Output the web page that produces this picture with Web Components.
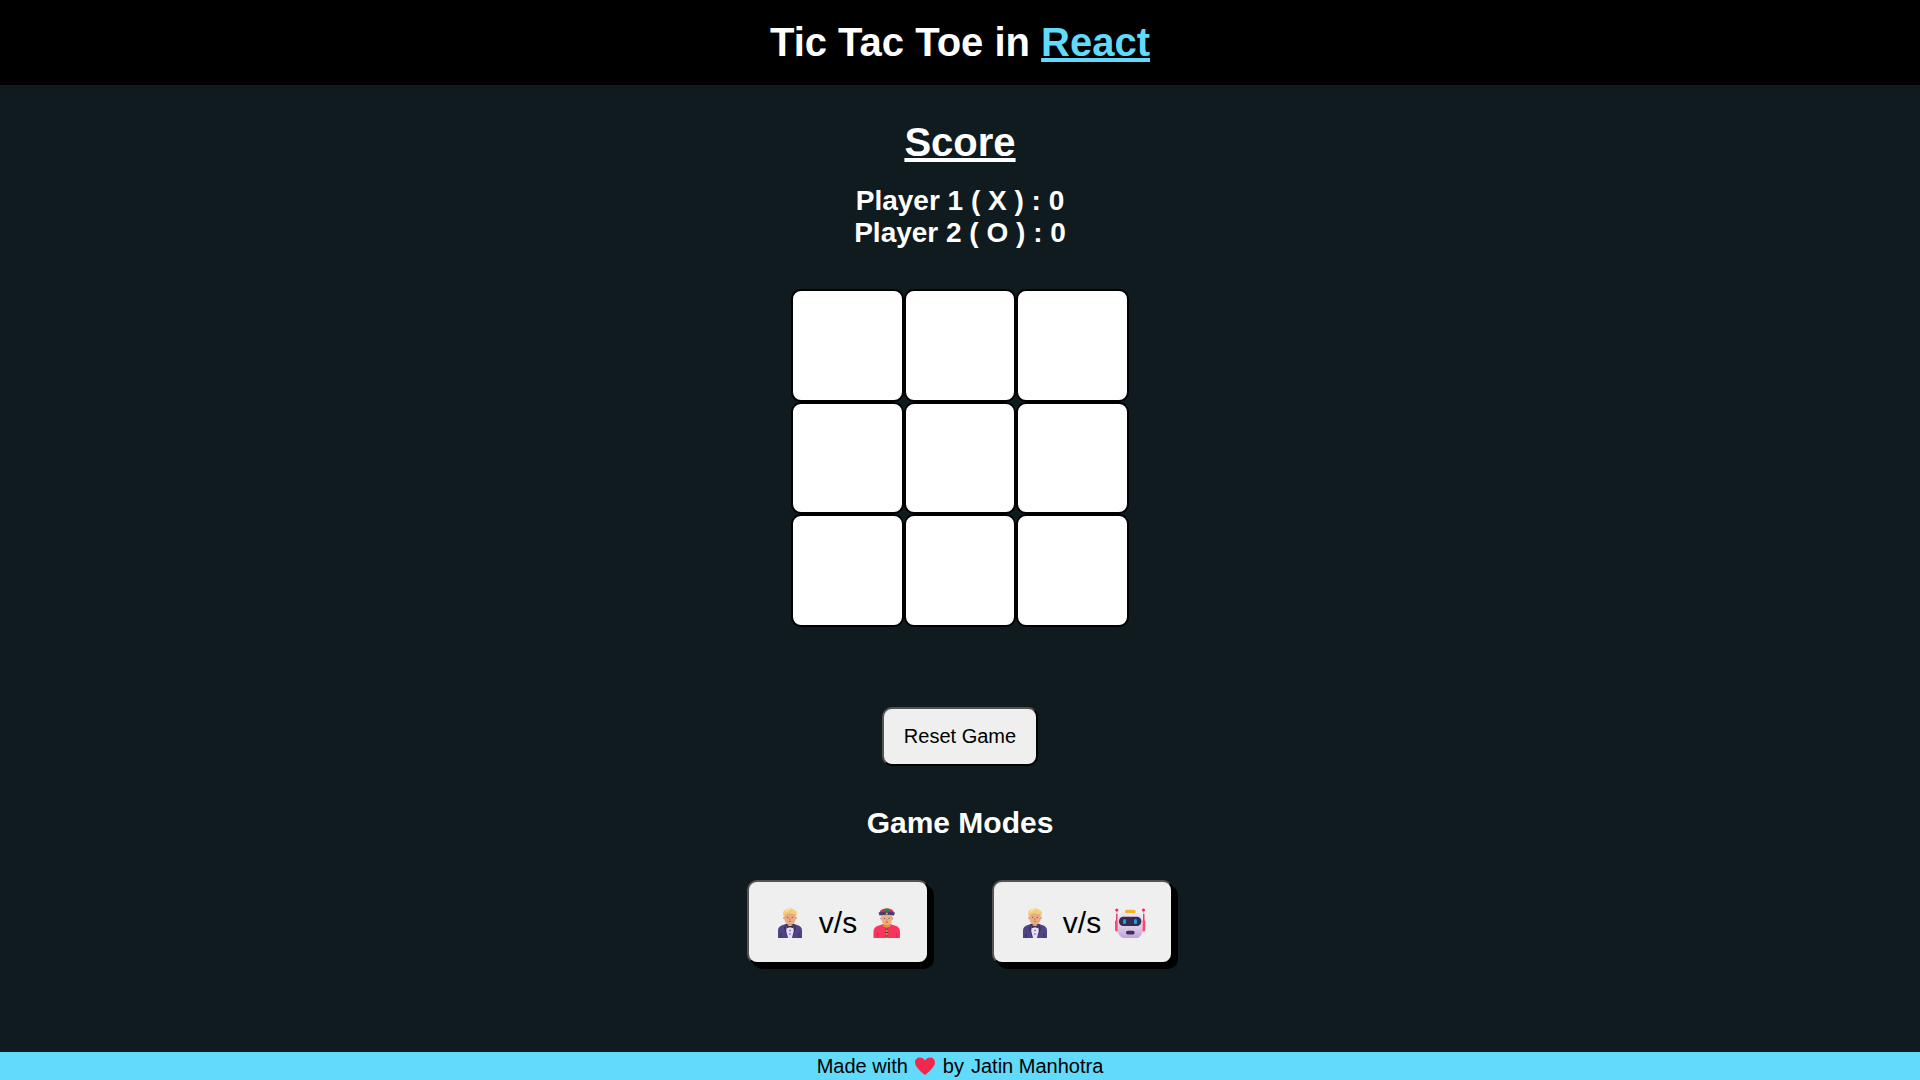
<!DOCTYPE html>
<html lang="en">
<head>
<meta charset="utf-8">
<meta name="viewport" content="width=device-width, initial-scale=1">
<title>Tic Tac Toe in React</title>
<style>
  body {
    margin: 0;
    background: #101b20;
    color: #fff;
    font-family: "Liberation Sans", Arial, Helvetica, sans-serif;
  }
</style>
</head>
<body>
<tic-tac-toe-app></tic-tac-toe-app>

<script>
const component = (name, html, setup) => {
  const template = document.createElement('template');
  template.innerHTML = html;
  customElements.define(name, class extends HTMLElement {
    constructor() {
      super();
      this.attachShadow({ mode: 'open' }).append(template.content.cloneNode(true));
    }
    connectedCallback() { if (setup) setup(this, this.shadowRoot); }
  });
};

component('app-header', `
  <style>
    :host { display: block; background: #000; padding: 20px; text-align: center; }
    h1 { margin: 0; font-size: 40px; line-height: 45px; }
    a { color: #61dafb; }
  </style>
  <h1>Tic Tac Toe in <a href="#react">React</a></h1>
`);

component('player-score', `
  <style>
    :host { display: block; font-size: 28px; line-height: 32px; font-weight: bold; }
  </style>
  <slot></slot>
`);

component('score-board', `
  <style>
    :host { display: flex; flex-direction: column; align-items: center; gap: 20px; }
    h2 { margin: 0; font-size: 40px; line-height: 46px; text-decoration: underline; }
    .players { text-align: center; }
  </style>
  <h2>Score</h2>
  <div class="players"><slot></slot></div>
`);

component('game-square', `
  <style>
    :host { display: block; }
    button {
      display: block; box-sizing: border-box; width: 100%; height: 100%;
      margin: 0; padding: 0; border: 2px solid #000; border-radius: 10px;
      background: #fff; color: #000; font: bold 60px "Liberation Sans", Arial, sans-serif;
    }
  </style>
  <button type="button"></button>
`, (host, root) => {
  const button = root.querySelector('button');
  button.setAttribute('aria-label', 'Square ' + host.getAttribute('index'));
  button.onclick = () => {
    if (!button.textContent) host.dispatchEvent(new CustomEvent('play', { bubbles: true, detail: button }));
  };
});

component('game-board', `
  <style>
    :host {
      display: grid; width: 338px; aspect-ratio: 1;
      grid-template-columns: repeat(3, 1fr); grid-template-rows: repeat(3, 1fr);
    }
  </style>
`, (host, root) => {
  for (let i = 1; i <= 9; i++) {
    const square = document.createElement('game-square');
    square.setAttribute('index', i);
    root.append(square);
  }
  let turn = 'X';
  root.addEventListener('play', e => {
    e.detail.textContent = turn;
    turn = turn === 'X' ? 'O' : 'X';
  });
  host.reset = () => {
    turn = 'X';
    root.querySelectorAll('game-square').forEach(s => { s.shadowRoot.querySelector('button').textContent = ''; });
  };
});

component('reset-button', `
  <style>
    :host { display: block; }
    button {
      display: block; margin: 0; padding: 16px 20px; border: 2px outset #000; border-radius: 10px;
      background: #efefef; color: #000; font: 20px/23px "Liberation Sans", Arial, sans-serif;
    }
  </style>
  <button type="button"><slot></slot></button>
`);

const tuxedo = `
  <path fill="#504486" d="M9 36V28.500Q9 24 14 23L18 21.500H24L28 23Q33 24 33 28.500V36Z"/>
  <path fill="#3b315f" d="M17 22 15 26 18.500 36H23.500L27 26 25 22Z"/>
  <path fill="#e9dcff" d="M17.800 23.500 21 22.500 24.200 23.500 24.800 29 23 36H19L17.200 29Z"/>
  <path fill="#d79468" d="M18.500 20h5v2.500l-2.500 1-2.500-1Z"/>
  <path fill="#392e55" d="M17.500 23 21 24 24.500 23V26.200L21 25.200 17.500 26.200Z"/>
  <circle cx="21" cy="28.500" r=".7" fill="#493975"/><circle cx="21" cy="32" r=".7" fill="#493975"/>
  <path fill="#3b315f" d="M11.500 31h1v5h-1ZM29.500 31h1v5h-1Z"/>
  <circle cx="15.500" cy="16" r="1.300" fill="#d9976d"/><circle cx="26.500" cy="16" r="1.300" fill="#d9976d"/>
  <path fill="#e7ad82" d="M15.300 10H26.700V16.500Q26.200 22.500 21 22.500T15.300 16.500Z"/>
  <path fill="#f2ce75" d="M14.800 14.500C13.500 11 14 8.300 17 7.500 19 6 24 6.200 25.500 8 28.300 8.500 28.500 12 27.200 14.500L26.200 12C24 12.300 21.500 11.800 20 10.800 19 12.300 17 12.300 15.800 12.500Z"/>
  <path fill="#ffe6a4" d="M16 9Q19 6 22 7.500 19 8 17 10ZM23 8q3 0 4 2-2-1-4-2Z"/>
  <circle cx="18.700" cy="15.300" r=".6" fill="#6b4437"/><circle cx="23.300" cy="15.300" r=".6" fill="#6b4437"/>
  <path fill="#cb815f" d="M20.500 16h1v2h-1Z"/><path fill="#b5524d" d="M19.500 19q1.500-.6 3 0-1.500 1.300-3 0Z"/>`;

const icons = {
  tuxedo,
  skullcap: `
  <path fill="#f8345f" d="M7.500 36V30Q7.500 24.500 13 23.500L17.500 22H24L28.500 23.500Q34 24.500 34 30V36Z"/>
  <path fill="#dd2d53" d="M11 31h1v5h-1ZM30 31h1v5h-1Z"/>
  <path fill="#d39165" d="M18 20h6v3.500l-3 1-3-1Z"/>
  <path fill="none" stroke="#e19625" stroke-width="1.200" d="M17 22.500 18 24.500H23.500L24.500 22.500M20.800 25v11"/>
  <path stroke="#503342" stroke-width="1.100" d="M19.300 27h3M19.300 30.500h3M19.300 34h3"/>
  <circle cx="15.500" cy="16.500" r="1.300" fill="#d9976d"/><circle cx="26" cy="16.500" r="1.300" fill="#d9976d"/>
  <path fill="#e9b187" d="M15.300 12H26.200V17Q25.700 23 20.800 23T15.300 17Z"/>
  <path fill="#df2c54" d="M13.500 10.500Q14.500 6.500 20.800 6.500T28 10.500Z"/>
  <path fill="#39804e" d="M18 8 19.500 6.500H22.500L24 8 22.500 10H19Z"/>
  <path fill="#4b3b70" d="M12.500 10.500Q20.800 8.500 29 10.500L28 13.500Q20.800 12 13.500 13.500Z"/>
  <circle cx="20.800" cy="11.500" r="1" fill="#f3b834"/>
  <circle cx="18.500" cy="16.300" r=".6" fill="#6b4437"/><circle cx="23.100" cy="16.300" r=".6" fill="#6b4437"/>
  <path fill="#cb815f" d="M20.300 17h1v1.500h-1Z"/><path fill="#c03a44" d="M19.300 20q1.500-.9 3 0-1.500 1.500-3 0Z"/>`,
  robot: `
  <defs><linearGradient id="shell" x1="0" y1="0" x2="0" y2="1"><stop stop-color="#eee4f3"/><stop offset=".6" stop-color="#d9c9e4"/><stop offset="1" stop-color="#c6a1da"/></linearGradient></defs>
  <path fill="#e9a9c4" d="M6.300 8h1v11h-1ZM33 8h1v11h-1Z"/>
  <circle cx="6.800" cy="8" r="1.600" fill="#ed3158"/><circle cx="33.500" cy="8" r="1.600" fill="#ed3158"/>
  <path fill="#e83d70" d="M6 12h1.500v7H6ZM33 12h1.500v7H33Z"/>
  <rect x="5" y="18" width="4" height="11.500" rx="1.800" fill="#ff4473"/><rect x="31.300" y="18" width="4" height="11.500" rx="1.800" fill="#ff4473"/>
  <rect x="15" y="7.800" width="10.500" height="6" rx="1.500" fill="#f5b42c"/>
  <path fill="url(#shell)" d="M13 11H27.500Q32.500 12 32.700 18V28Q32.300 33.500 28 36H12.500Q8 33.500 7.600 28V18Q8 12 13 11Z"/>
  <rect x="9" y="14.700" width="22.300" height="9.200" rx="4.300" fill="#322c52"/>
  <rect x="13" y="17" width="3" height="5" rx="1.500" fill="#279fe0"/><rect x="24" y="17" width="3" height="5" rx="1.500" fill="#279fe0"/>
  <rect x="16" y="28.700" width="8.600" height="3.800" rx="1.800" fill="#3a3156"/>`
};

component('emoji-icon', `
  <style>
    :host { display: block; width: 41px; height: 40px; }
    svg { display: block; width: 100%; height: 100%; }
  </style>
  <svg viewBox="0 0 41 40" aria-hidden="true"></svg>
`, (host, root) => { root.querySelector('svg').innerHTML = icons[host.getAttribute('name')]; });

component('mode-button', `
  <style>
    :host { display: block; }
    button {
      display: flex; align-items: center; margin: 0; padding: 20px;
      border: 2px outset #000; border-radius: 10px; box-shadow: 5px 5px #000;
      background: #efefef; color: #000; font: 30px/38px "Liberation Sans", Arial, sans-serif;
    }
    .versus { white-space: pre; padding-top: 2px; }
  </style>
  <button type="button"><slot name="first"></slot><span class="versus"> v/s </span><slot name="second"></slot></button>
`);

component('game-modes', `
  <style>
    :host { display: flex; flex-direction: column; align-items: center; gap: 40px; }
    h3 { margin: 0; font-size: 30px; line-height: 34px; }
    .modes { display: flex; gap: 63px; }
  </style>
  <h3>Game Modes</h3>
  <div class="modes"><slot></slot></div>
`);

component('app-footer', `
  <style>
    :host {
      display: flex; justify-content: center; align-items: center;
      background: #61dafb; color: #000; font-size: 20px; line-height: 28px;
    }
    svg { width: 24px; height: 20px; margin: 0 6px 0 5px; }
    a { color: inherit; text-decoration: none; margin-left: 7px; }
  </style>
  <span>Made with</span>
  <svg viewBox="0 0 24 20" role="img" aria-label="love"><path fill="#f3274d" d="M12 19C9 16.500 2 11 2 6.500 2 3.500 4 1.500 7 1.500 9 1.500 11 2.500 12 4.500 13 2.500 15 1.500 17 1.500 20 1.500 22 3.500 22 6.500 22 11 15 16.500 12 19Z"/></svg>
  <span>by</span><a href="#author">Jatin Manhotra</a>
`);

component('tic-tac-toe-app', `
  <style>
    :host { display: flex; flex-direction: column; min-height: 100vh; }
    main { flex: 1; display: flex; flex-direction: column; align-items: center; padding: 34px 0; }
    game-board { margin: 40px 0 80px; }
    game-modes { margin-top: 40px; }
  </style>
  <app-header></app-header>
  <main>
    <score-board>
      <player-score>Player 1 ( X ) : 0</player-score>
      <player-score>Player 2 ( O ) : 0</player-score>
    </score-board>
    <game-board></game-board>
    <reset-button>Reset Game</reset-button>
    <game-modes>
      <mode-button><emoji-icon slot="first" name="tuxedo"></emoji-icon><emoji-icon slot="second" name="skullcap"></emoji-icon></mode-button>
      <mode-button><emoji-icon slot="first" name="tuxedo"></emoji-icon><emoji-icon slot="second" name="robot"></emoji-icon></mode-button>
    </game-modes>
  </main>
  <app-footer></app-footer>
`, (host, root) => {
  root.querySelector('reset-button').onclick = () => root.querySelector('game-board').reset();
});
</script>
</body>
</html>
